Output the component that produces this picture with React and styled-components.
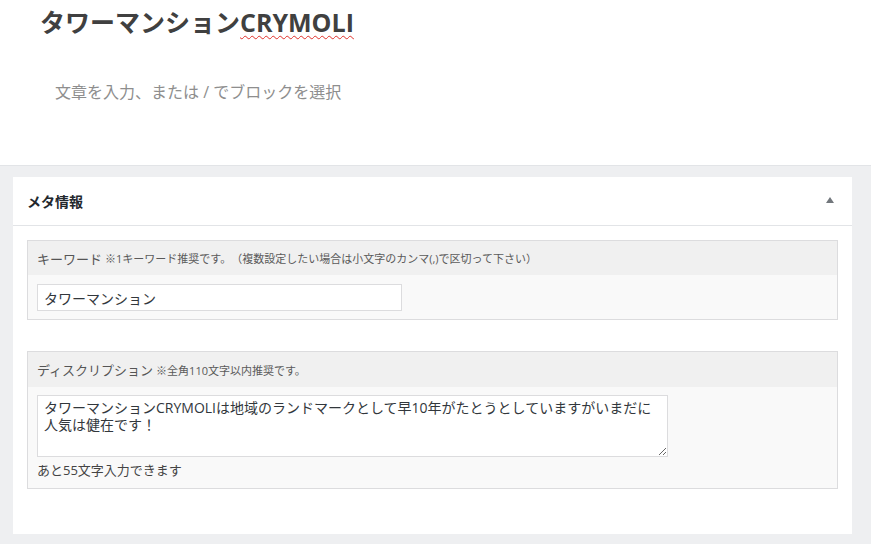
import styled, { createGlobalStyle } from "styled-components";

const GlobalStyle = createGlobalStyle`
  html, body {
    margin: 0;
    padding: 0;
    background: #fff;
    font-family: "Open Sans", "Noto Sans CJK JP", sans-serif;
    text-spacing-trim: space-all;
  }
`;

const Page = styled.div`
  width: 871px;
  height: 544px;
  overflow: hidden;
  display: flex;
  flex-direction: column;
`;

const EditorArea = styled.div`
  height: 167px;
  box-sizing: border-box;
  border-bottom: 1px solid #e2e4e7;
  padding: 4px 0 0 40px;
`;

const PostTitle = styled.h1`
  margin: 0;
  font-size: 25px;
  line-height: 36px;
  font-weight: 700;
  color: #404040;
`;

const Spelled = styled.span`
  text-decoration: underline wavy #e0302a;
  text-decoration-thickness: 1px;
  text-underline-offset: 3px;
`;

const Placeholder = styled.p`
  margin: 40px 0 0 15px;
  font-size: 16px;
  line-height: 24px;
  color: #8e8e8e;
`;

const MetaArea = styled.div`
  flex: 1;
  background: #eeeff1;
  padding: 11px 19px 10px 13px;
`;

const Panel = styled.section`
  background: #fff;
`;

const PanelHeader = styled.div`
  height: 49px;
  box-sizing: border-box;
  border-bottom: 1px solid #e2e4e7;
  display: flex;
  align-items: center;
  justify-content: space-between;
  padding: 0 18px 0 14px;
`;

const PanelTitle = styled.h2`
  margin: 0;
  font-size: 14px;
  font-weight: 700;
  color: #23282d;
`;

const Toggle = styled.span`
  width: 0;
  height: 0;
  border-left: 4px solid transparent;
  border-right: 4px solid transparent;
  border-bottom: 6px solid #72777c;
  margin-top: -2px;
`;

const PanelBody = styled.div`
  padding: 14px 14px 45px;
  display: flex;
  flex-direction: column;
  gap: 31px;
`;

const FieldBox = styled.div`
  border: 1px solid #dcdcde;
`;

const FieldHead = styled.div`
  height: ${(p) => p.$h}px;
  background: #f0f0f0;
  display: flex;
  align-items: center;
  padding: 0 9px;
  color: #555;
`;

const FieldLabel = styled.span`
  font-size: 13px;
`;

const FieldNote = styled.small`
  font-size: 11px;
  margin-left: 3px;
  color: #5a5a5a;
`;

const FieldBody = styled.div`
  background: #f9f9f9;
  padding: ${(p) => p.$pad};
`;

const TextInput = styled.input`
  display: block;
  width: 365px;
  height: 27px;
  box-sizing: border-box;
  border: 1px solid #dcdcde;
  background: #fff;
  padding: 0 6px;
  font-family: "Open Sans", "Noto Sans CJK JP", sans-serif;
  font-size: 14px;
  color: #32373c;
  outline: none;
`;

const TextArea = styled.textarea`
  display: block;
  width: 631px;
  height: 62px;
  box-sizing: border-box;
  border: 1px solid #dcdcde;
  background: #fff;
  padding: 3px 6px;
  font-family: "Open Sans", "Noto Sans CJK JP", sans-serif;
  font-size: 14px;
  line-height: 17px;
  color: #32373c;
  outline: none;
`;

const Counter = styled.div`
  margin-top: 3px;
  font-size: 13px;
  line-height: 20px;
  color: #444;
`;

export default function App() {
  return (
    <Page>
      <GlobalStyle />
      <EditorArea>
        <PostTitle>
          タワーマンション<Spelled>CRYMOLI</Spelled>
        </PostTitle>
        <Placeholder>文章を入力、または / でブロックを選択</Placeholder>
      </EditorArea>
      <MetaArea>
        <Panel>
          <PanelHeader>
            <PanelTitle>メタ情報</PanelTitle>
            <Toggle />
          </PanelHeader>
          <PanelBody>
            <FieldBox>
              <FieldHead $h={34}>
                <FieldLabel>キーワード</FieldLabel>
                <FieldNote>
                  ※1キーワード推奨です。（複数設定したい場合は小文字のカンマ(,)で区切って下さい）
                </FieldNote>
              </FieldHead>
              <FieldBody $pad="9px 9px 8px">
                <TextInput readOnly defaultValue="タワーマンション" />
              </FieldBody>
            </FieldBox>
            <FieldBox>
              <FieldHead $h={35}>
                <FieldLabel>ディスクリプション</FieldLabel>
                <FieldNote>※全角110文字以内推奨です。</FieldNote>
              </FieldHead>
              <FieldBody $pad="8px 9px 8px">
                <TextArea
                  readOnly
                  defaultValue="タワーマンションCRYMOLIは地域のランドマークとして早10年がたとうとしていますがいまだに人気は健在です！"
                />
                <Counter>あと55文字入力できます</Counter>
              </FieldBody>
            </FieldBox>
          </PanelBody>
        </Panel>
      </MetaArea>
    </Page>
  );
}
